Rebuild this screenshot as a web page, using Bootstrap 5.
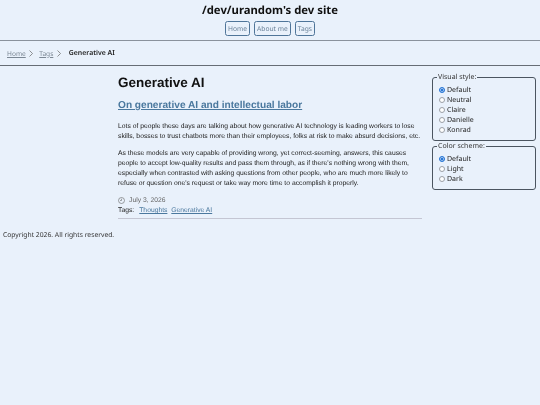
<!DOCTYPE html>
<html lang="en"><head><meta charset="utf-8"><title>Generative AI</title>
<link href="https://cdn.jsdelivr.net/npm/bootstrap@5.3.0/dist/css/bootstrap.min.css" rel="stylesheet">
<style>
body{background:#e9f1fb;font-family:"Noto Sans",sans-serif;color:#111;font-size:8px;line-height:10px;text-rendering:geometricPrecision}
.page-layer{will-change:opacity;opacity:.999}
.site-head{height:41px;border-bottom:1px solid #8a929c;padding-top:4px}
.site-title{font-size:11.3px;font-weight:700;line-height:14px;margin:0 0 3px;color:#111}
.top-link{display:block;border:1px solid #4f7599;border-radius:2.5px;padding:0 2px;height:15px;line-height:13px;font-size:6.7px;color:#6a8299;text-decoration:none}
.crumbs{height:25px;border-bottom:1px solid #666d75;padding:1px 0 0 7px;font-size:6.6px;margin:0}
.crumbs a{color:#7b8794}
.crumbs svg{margin:0 6px 0 3.5px}
.crumbs b{color:#222;margin-left:2px;font-weight:600;font-size:6.9px}
.main-wrap{width:304px;margin-left:118px;font-family:"Liberation Sans",sans-serif;color:#222}
.main-wrap h1{font-size:13.5px;font-weight:700;line-height:16px;margin:9px 0 8px;color:#111}
.main-wrap h2{font-size:10.15px;font-weight:700;line-height:13px;margin:0 0 10px}
.main-wrap h2 a{color:#4a789e}
.main-wrap p{font-size:6.75px;line-height:10px;margin:0 0 7px}
.meta-line{font-size:6.75px;line-height:10px}
.meta-line a{color:#4a789e;margin-right:2px}
.date-txt{color:#666;margin-top:6px}
.date-txt svg{margin-top:-2px}
.end-rule{border-top:1px solid #c4c6d3;margin-top:2px}
.side-col{width:104px;margin:7px 4px 0 0}
.side-col fieldset{border:1px solid #4b5560;border-radius:3px;padding:4px 4px 4px 4px;margin:0 0 1px;display:block;min-width:0}
.side-col legend{float:none;width:auto;font-size:7px;line-height:9px;margin:0;padding:0 1px;color:#333}
.opt{display:flex;align-items:center;gap:2px;height:10px;font-size:7px;color:#222;padding-left:2px;margin:0}
.opt input{appearance:none;width:6px;height:6px;border:.6px solid #9a9fa6;border-radius:50%;margin:-2px 0 0;background:#fff}
.opt input:checked{border:1.6px solid #2a78d6;background:#2a78d6;box-shadow:inset 0 0 0 .5px #fff}
.foot-txt{padding-left:3px;margin:11px 0 0;font-size:6.75px;color:#333}
</style></head><body>
<div class="page-layer">
<header class="site-head text-center">
<h1 class="site-title">/dev/urandom's dev site</h1>
<nav class="d-flex justify-content-center gap-1"><a class="top-link" href="#">Home</a><a class="top-link" href="#">About me</a><a class="top-link" href="#">Tags</a></nav>
</header>
<nav class="crumbs d-flex align-items-center">
<a href="#">Home</a><svg width="4" height="7" viewBox="0 0 4 7"><path d="M.5.5 3.5 3.5.5 6.5" fill="none" stroke="#666" stroke-width=".7"/></svg>
<a href="#">Tags</a><svg width="4" height="7" viewBox="0 0 4 7"><path d="M.5.5 3.5 3.5.5 6.5" fill="none" stroke="#666" stroke-width=".7"/></svg>
<b>Generative AI</b>
</nav>
<div class="d-flex align-items-start">
<main class="main-wrap flex-shrink-0">
<h1>Generative AI</h1>
<h2><a href="#">On generative AI and intellectual labor</a></h2>
<p>Lots of people these days are talking about how generative AI technology is leading workers to lose skills, bosses to trust chatbots more than their employees, folks at risk to make absurd decisions, etc.</p>
<p>As these models are very capable of providing wrong, yet correct-seeming, answers, this causes people to accept low-quality results and pass them through, as if there's nothing wrong with them, especially when contrasted with asking questions from other people, who are much more likely to refuse or question one's request or take way more time to accomplish it properly.</p>
<div class="meta-line date-txt d-flex align-items-center"><svg width="7" height="7" viewBox="0 0 7 7"><circle cx="3.5" cy="3.5" r="3" fill="none" stroke="#666" stroke-width=".6"/><path d="M3.5 1.7V3.5H2" fill="none" stroke="#666" stroke-width=".6"/></svg><span class="ms-1">July 3, 2026</span></div>
<div class="meta-line">Tags: &nbsp;&thinsp;<a href="#">Thoughts</a> <a href="#">Generative AI</a></div>
<div class="end-rule"></div>
</main>
<aside class="side-col ms-auto">
<fieldset><legend>Visual style:</legend>
<label class="opt"><input type="radio" name="v" checked>Default</label>
<label class="opt"><input type="radio" name="v">Neutral</label>
<label class="opt"><input type="radio" name="v">Claire</label>
<label class="opt"><input type="radio" name="v">Danielle</label>
<label class="opt"><input type="radio" name="v">Konrad</label>
</fieldset>
<fieldset><legend>Color scheme:</legend>
<label class="opt"><input type="radio" name="c" checked>Default</label>
<label class="opt"><input type="radio" name="c">Light</label>
<label class="opt"><input type="radio" name="c">Dark</label>
</fieldset>
</aside>
</div>
<footer class="foot-txt">Copyright 2026. All rights reserved.</footer>
</div>
</body></html>
